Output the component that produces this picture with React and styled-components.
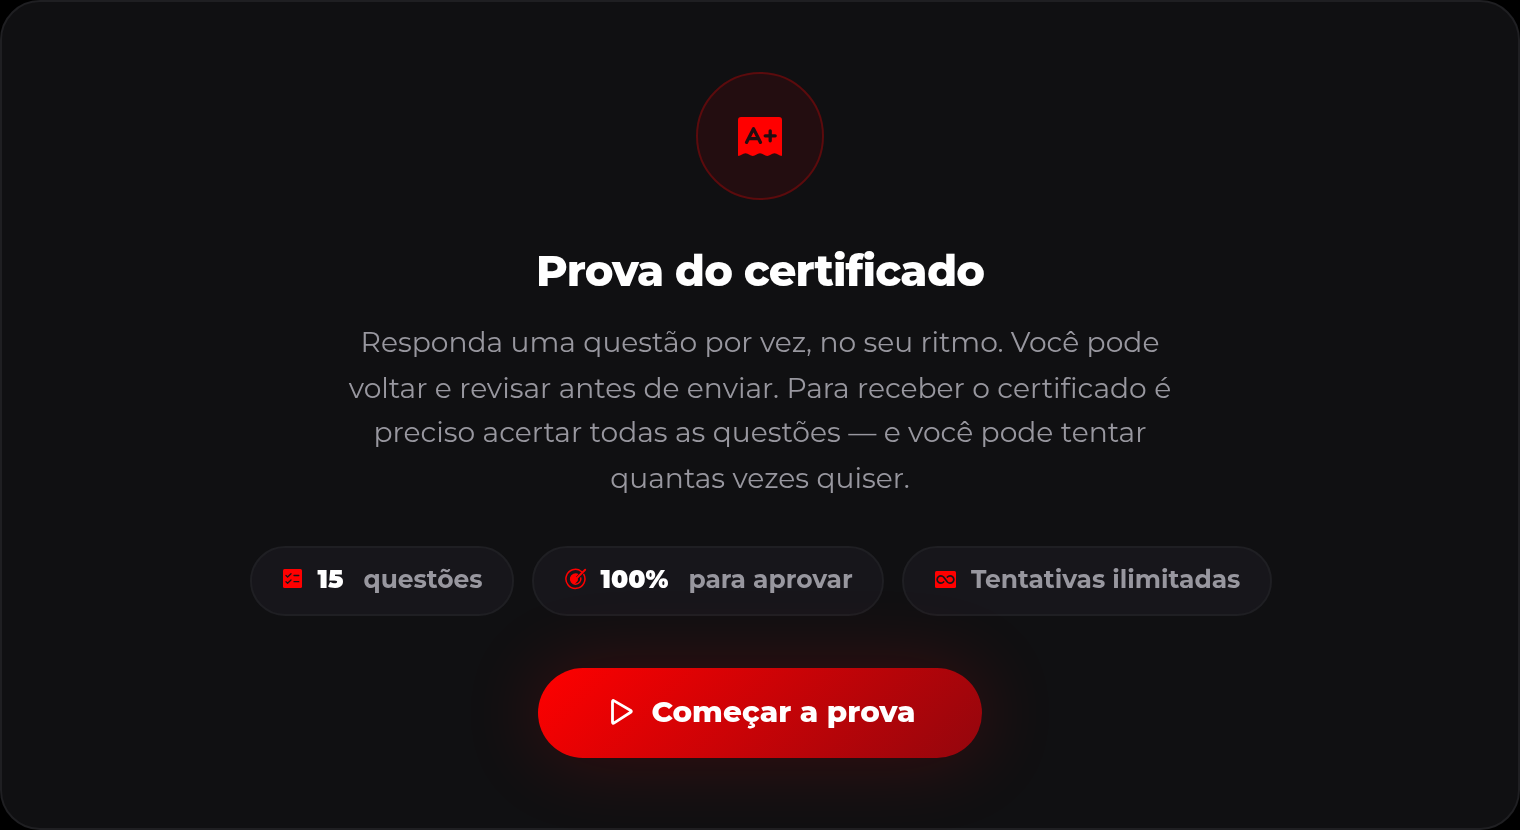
import React from 'react'
import styled, { createGlobalStyle } from 'styled-components'

const GlobalStyle = createGlobalStyle`
  *{
    box-sizing: border-box;
  }
  body{
    margin: 0;
    background: #000;
    font-family: Montserrat, Inter, sans-serif;
  }
`

const lines = [
  { text: 'Responda uma questão por vez, no seu ritmo. Você pode', height: 46 },
  { text: 'voltar e revisar antes de enviar. Para receber o certificado é', height: 44 },
  { text: 'preciso acertar todas as questões — e você pode tentar', height: 46 },
  { text: 'quantas vezes quiser.', height: 45 },
]

function ExamIcon() {
  return (
    <svg width="44" height="40" viewBox="0 0 44 40">
      <path
        fill="#f00"
        d="M3 0H41Q44 0 44 3V38Q44 39.500 42 38.500L38.500 36.700Q36.500 35.800 34.500 36.700L31 38.500Q29.200 39.400 27.400 38.500L24 36.700Q22 35.800 20 36.700L16.600 38.500Q14.800 39.400 13 38.500L9.500 36.700Q7.500 35.800 5.500 36.700L2 38.500Q0 39.500 0 38V3Q0 0 3 0Z"
      />
      <g fill="none" stroke="#230d10" strokeWidth="3.3" strokeLinecap="round" strokeLinejoin="round">
        <path d="M8.500 25.400L15.500 11.700L22.500 25.400M11.500 21.700H19.500" />
        <path d="M27.200 18.800H37.200M32.200 13.800V23.800" />
      </g>
    </svg>
  )
}

function ListIcon() {
  return (
    <svg width="19" height="19" viewBox="0 0 19 19">
      <rect width="19" height="19" rx="1.500" fill="#f00" />
      <g fill="none" stroke="#17161b" strokeWidth="1.300" strokeLinecap="round" strokeLinejoin="round">
        <path d="M3 6.500L4.600 8L8 4.800M3 12.700L4.600 14.200L8 11M11 6.500H15.800M11 12.700H15.800" />
      </g>
    </svg>
  )
}

function TargetIcon() {
  return (
    <svg width="22" height="22" viewBox="0 0 22 22">
      <g fill="none" stroke="#f00" strokeWidth="1.500" strokeLinecap="round">
        <path d="M16.400 3.500A9.500 9.500 0 1 0 18.800 6.400" />
        <path d="M15.800 10A5.300 5.300 0 0 1 10.500 16.200" />
        <path d="M10.600 11.200L20.200 1.700" strokeWidth="1.900" />
      </g>
      <path fill="#f00" d="M13.500 5.900A5.900 5.900 0 1 0 10.500 17Q9.600 15.600 11.200 14.600Q13.300 13.300 13 10.800L11 9Z" />
    </svg>
  )
}

function InfinityIcon() {
  return (
    <svg width="21" height="17" viewBox="0 0 21 17">
      <rect width="21" height="17" rx="1.500" fill="#f00" />
      <path
        fill="none"
        stroke="#17161b"
        strokeWidth="1.700"
        strokeLinecap="round"
        d="M8.600 11A3.700 3.700 0 1 1 8.600 6L12.400 11A3.700 3.700 0 1 0 12.400 6"
      />
    </svg>
  )
}

function PlayIcon() {
  return (
    <svg width="22" height="26" viewBox="0 0 22 26">
      <path
        fill="none"
        stroke="#fff"
        strokeWidth="2.800"
        strokeLinejoin="round"
        d="M1.500 2.800Q1.500 0.800 3.200 1.900L19.700 11.500Q21 12.400 19.700 13.300L3.200 23.900Q1.500 25 1.500 23Z"
      />
    </svg>
  )
}

export default function App() {
  return (
    <>
      <GlobalStyle />
      <Panel>
        <Badge>
          <ExamIcon />
        </Badge>
        <Title>Prova do certificado</Title>
        <Description>
          {lines.map((line) => (
            <Line key={line.text} $height={line.height}>{line.text}</Line>
          ))}
        </Description>
        <Pills>
          <Pill $width={264} $lift={1}>
            <ListIcon />
            <Strong $gap={15.6}>15</Strong>
            <Label $gap={20}>questões</Label>
          </Pill>
          <Pill $width={352}>
            <TargetIcon />
            <Strong $gap={13.6}>100%</Strong>
            <Label $gap={20}>para aprovar</Label>
          </Pill>
          <Pill $width={370}>
            <InfinityIcon />
            <Label $gap={15}>Tentativas ilimitadas</Label>
          </Pill>
        </Pills>
        <StartButton>
          <PlayIcon />
          <ButtonText>Começar a prova</ButtonText>
        </StartButton>
      </Panel>
    </>
  )
}

const Panel = styled.main`
  height: 830px;
  padding-top: 70px;
  display: flex;
  flex-direction: column;
  align-items: center;
  background: #101012;
  border: 2px solid #1f1f22;
  border-radius: 40px;
  will-change: transform;
`

const Badge = styled.div`
  width: 128px;
  height: 128px;
  padding-top: 2px;
  flex-shrink: 0;
  display: flex;
  align-items: center;
  justify-content: center;
  background: #230d10;
  border: 2px solid #5b0b0d;
  border-radius: 50%;
`

const Title = styled.h1`
  margin: 44px 0 0;
  height: 54px;
  line-height: 54px;
  font-size: 43.2px;
  font-weight: 800;
  letter-spacing: -0.02em;
  white-space: nowrap;
  color: #fff;
`

const Description = styled.p`
  margin: 22px 0 0;
  display: flex;
  flex-direction: column;
  align-items: center;
  color: #98979f;
  font-size: 28.16px;
  font-weight: 400;
`

const Line = styled.span`
  height: ${({ $height }) => $height}px;
  line-height: 45px;
  white-space: nowrap;
`

const Pills = styled.div`
  margin: 45px 0 0 2px;
  display: flex;
  gap: 18px;
`

const Pill = styled.div`
  width: ${({ $width }) => $width}px;
  height: 70px;
  padding: 0 0 4px 31px;
  display: flex;
  align-items: center;
  background: #17161b;
  border: 2px solid #1f1f23;
  border-radius: 35px;
  font-size: 24.96px;
  white-space: nowrap;

  svg{
    flex-shrink: 0;
    margin-bottom: ${({ $lift = 0 }) => $lift}px;
  }
`

const Label = styled.span`
  margin-left: ${({ $gap }) => $gap}px;
  font-weight: 700;
  color: #98979f;
`

const Strong = styled(Label)`
  font-weight: 900;
  color: #fff;
`

const StartButton = styled.button`
  width: 444px;
  height: 90px;
  margin-top: 52px;
  padding: 0 0 2px 73px;
  flex-shrink: 0;
  display: flex;
  align-items: center;
  gap: 18.5px;
  border: none;
  border-radius: 45px;
  background: linear-gradient(135deg, #f00 0%, #93060d 100%);
  box-shadow: 0 0 80px rgba(255, 0, 0, 0.18);
  color: #fff;
  font-family: inherit;
  font-size: 29.44px;
  font-weight: 800;
  white-space: nowrap;
  cursor: pointer;
`

const ButtonText = styled.span`
  margin-bottom: 2px;
`
